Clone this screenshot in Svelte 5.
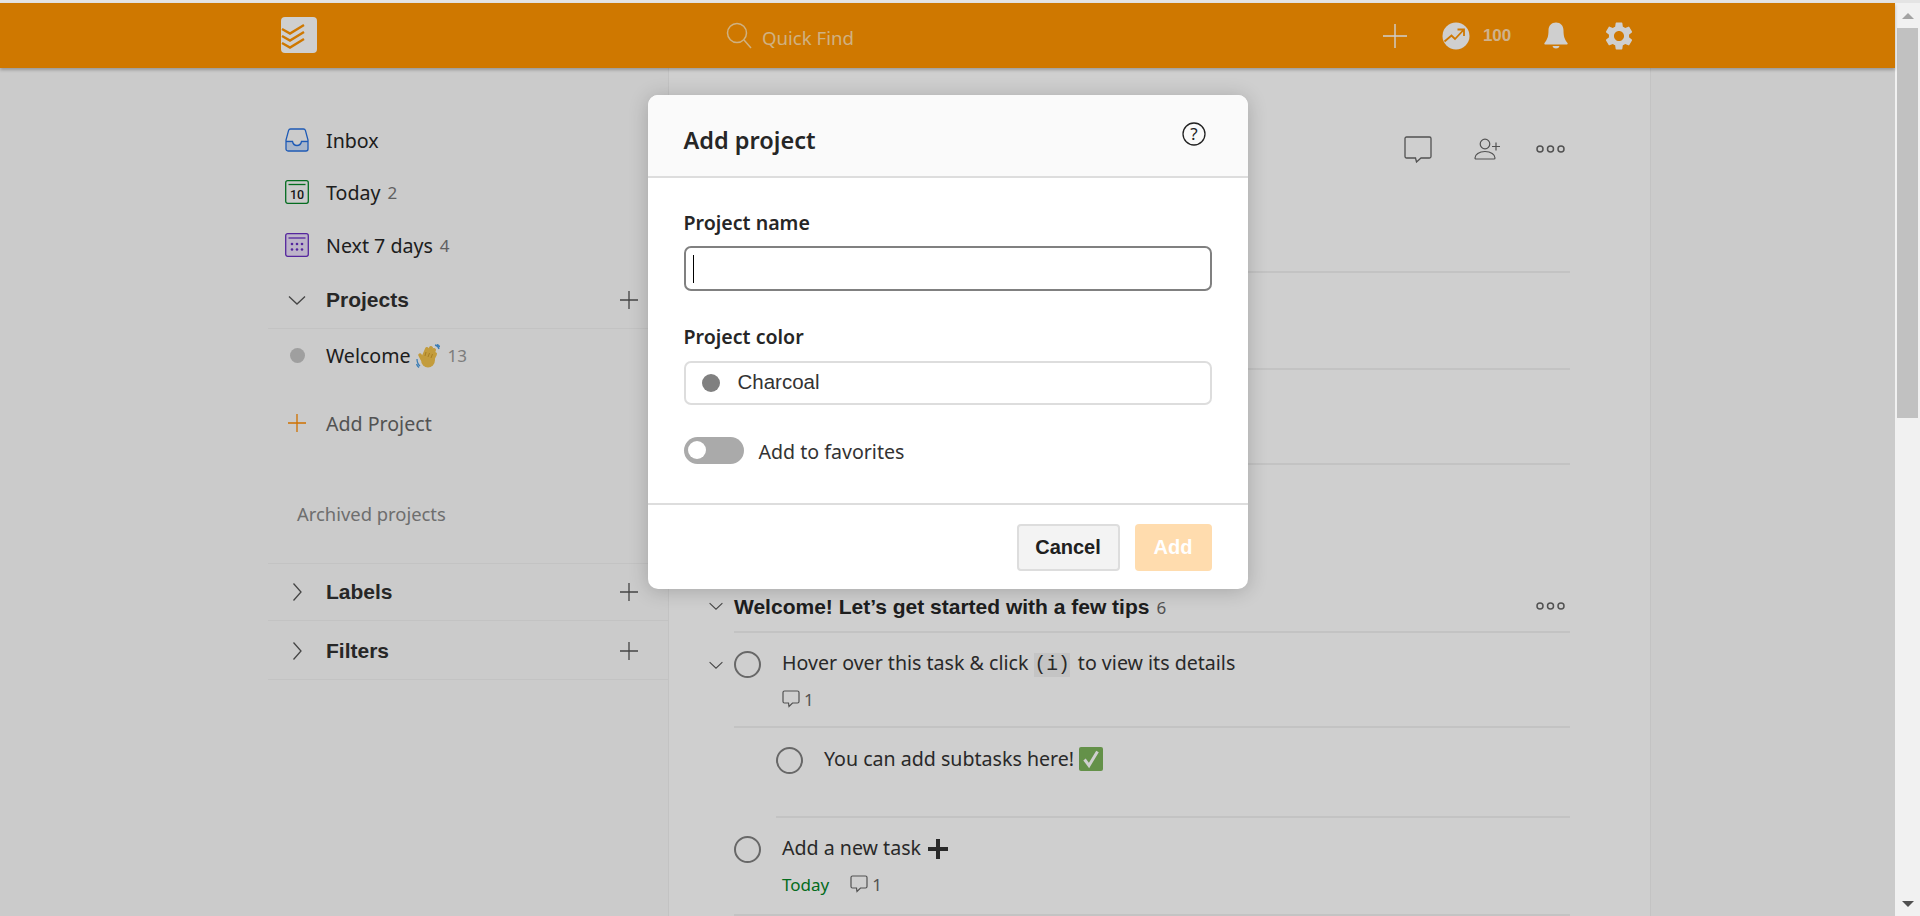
<script lang="ts">
    const count = { today: 2, week: 4, welcome: 13, tips: 6 };
</script>

{#snippet plus(color = "#555")}
    <svg class="plus" viewBox="0 0 20 20" width="20" height="20">
        <path d="M10 1v18M1 10h18" stroke={color} stroke-width="1.3" fill="none" />
    </svg>
{/snippet}

{#snippet chevron(open = false)}
    <svg class="chev" viewBox="0 0 20 20" width="20" height="20">
        {#if open}
            <path d="M2 6.5l8 7.5 8-7.5" stroke="#555" stroke-width="1.3" fill="none" />
        {:else}
            <path d="M6.5 1.5l7.5 8.5-7.5 8.5" stroke="#555" stroke-width="1.3" fill="none" />
        {/if}
    </svg>
{/snippet}

{#snippet bubble(size = 18)}
    <svg class="bubble" viewBox="0 0 18 18" width={size} height={size}>
        <path d="M2.5 1h13A1.5 1.5 0 0 1 17 2.500v9a1.500 1.500 0 0 1-1.500 1.500H10.500L7 16.500 6.500 13H2.500A1.500 1.500 0 0 1 1 11.500v-9A1.500 1.500 0 0 1 2.500 1z" stroke="#666" stroke-width="1.200" fill="none" />
    </svg>
{/snippet}

{#snippet bubbleLarge()}
    <svg viewBox="0 0 28 27" width="28" height="27">
        <path d="M2.500 1h23A1.500 1.500 0 0 1 27 2.500v18a1.500 1.500 0 0 1-1.500 1.500H17l-4.500 4-1-4H2.500A1.500 1.500 0 0 1 1 20.500v-18A1.500 1.500 0 0 1 2.500 1z" stroke="#666" stroke-width="1.300" fill="none" />
    </svg>
{/snippet}

{#snippet dots()}
    <svg viewBox="0 0 30 10" width="30" height="10">
        <circle cx="5" cy="5" r="3" stroke="#666" stroke-width="1.500" fill="none" />
        <circle cx="15.500" cy="5" r="3" stroke="#666" stroke-width="1.500" fill="none" />
        <circle cx="26" cy="5" r="3" stroke="#666" stroke-width="1.500" fill="none" />
    </svg>
{/snippet}

<div class="window">
    <div class="topline"></div>
    <div class="viewport">
        <div class="main">
            <header>
                <div class="logo">
                    <svg viewBox="0 0 36 36" width="36" height="36">
                        <path d="M1 12l8 4.500L23 8M1 19l8 4.500L23 15M1 26l8 4.500L23 22" stroke="#ff9400" stroke-width="2.400" fill="none" />
                    </svg>
                </div>
                <div class="search">
                    <svg viewBox="0 0 26 28" width="26" height="28">
                        <circle cx="11" cy="11" r="9.500" stroke="#ffdba0" stroke-width="1.500" fill="none" />
                        <path d="M18 18l7 8" stroke="#ffdba0" stroke-width="1.500" fill="none" />
                    </svg>
                    <span>Quick Find</span>
                </div>
                <div class="top-actions">
                    <svg class="top-plus" viewBox="0 0 26 26" width="26" height="26">
                        <path d="M13 1v24M1 13h24" stroke="#fff" stroke-width="1.400" fill="none" />
                    </svg>
                    <div class="karma">
                        <svg viewBox="0 0 28 28" width="28" height="28">
                            <circle cx="14" cy="14" r="13.500" fill="#fff" />
                            <path d="M2.500 19.500l7-6 3.500 3.500 8-8.500M15.500 7.500h6.500v6.500" stroke="#ff9400" stroke-width="1.800" fill="none" />
                        </svg>
                        <span>100</span>
                    </div>
                    <svg class="bell" viewBox="0 0 24 27" width="24" height="27">
                        <path d="M12 0.500c-4.500 0-7.500 3.200-7.500 8 0 6-1.200 9-4 12.500-.5.800 0 1.500 1 1.500h21c1 0 1.500-.7 1-1.500-2.800-3.500-4-6.500-4-12.500 0-4.800-3-8-7.500-8z" fill="#fff" />
                        <path d="M8.500 24h7c-.5 1.700-1.700 2.500-3.500 2.500S9 25.700 8.500 24z" fill="#fff" />
                    </svg>
                    <svg class="gear" viewBox="2 2 20 20" width="28" height="28">
                        <path d="M19.140 12.940c.04-.3.06-.61.06-.94 0-.32-.02-.64-.07-.94l2.030-1.580a.49.49 0 0 0 .12-.61l-1.920-3.320a.488.488 0 0 0-.59-.22l-2.390.96c-.5-.38-1.030-.7-1.620-.94l-.36-2.540a.484.484 0 0 0-.48-.41h-3.840c-.24 0-.43.17-.47.41l-.36 2.540c-.59.24-1.130.57-1.620.94l-2.390-.96c-.22-.08-.47 0-.59.22L2.740 8.870c-.12.21-.08.47.12.61l2.030 1.580c-.05.3-.09.63-.09.94s.02.64.07.94l-2.030 1.580a.49.49 0 0 0-.12.61l1.920 3.320c.12.22.37.29.59.22l2.390-.96c.5.38 1.030.7 1.620.94l.36 2.540c.05.24.24.41.48.41h3.840c.24 0 .44-.17.47-.41l.36-2.540c.59-.24 1.130-.56 1.620-.94l2.390.96c.22.08.47 0 .59-.22l1.920-3.320c.12-.22.07-.47-.12-.61l-2.010-1.580zM12 15.600c-1.980 0-3.600-1.620-3.600-3.600s1.620-3.600 3.600-3.600 3.600 1.620 3.600 3.600-1.620 3.600-3.600 3.600z" fill="#fff" />
                    </svg>
                </div>
            </header>

            <div class="columns">
                <nav>
                    <div class="nav-item">
                        <span class="slot">
                            <svg viewBox="0 0 24 24" width="24" height="24">
                                <path d="M1 14.500h6.500l1.500 3h6l1.500-3H23V21a1.500 1.500 0 0 1-1.500 1.500h-19A1.500 1.500 0 0 1 1 21z" fill="#cfe0fa" />
                                <path d="M5.500 1h13a2 2 0 0 1 1.900 1.400L23 12v9a2 2 0 0 1-2 2H3a2 2 0 0 1-2-2v-9L3.600 2.400A2 2 0 0 1 5.500 1zM1 13.500h6.500c.5 2.500 2 4 4.500 4s4-1.500 4.500-4H23" stroke="#246fe0" stroke-width="1.300" fill="none" />
                            </svg>
                        </span>
                        <span class="label">Inbox</span>
                    </div>
                    <div class="nav-item">
                        <span class="slot">
                            <svg viewBox="0 0 24 24" width="24" height="24">
                                <rect x="0.700" y="0.700" width="22.600" height="22.600" rx="2" stroke="#058527" stroke-width="1.300" fill="none" />
                                <path d="M3.500 4.500h17" stroke="#058527" stroke-width="1.300" />
                                <text x="12" y="19" text-anchor="middle" class="day">10</text>
                            </svg>
                        </span>
                        <span class="label">Today</span><span class="count">{count.today}</span>
                    </div>
                    <div class="nav-item week">
                        <span class="slot">
                            <svg viewBox="0 0 24 24" width="24" height="24">
                                <rect x="0.700" y="0.700" width="22.600" height="22.600" rx="2" stroke="#692fc2" stroke-width="1.300" fill="#e9def8" />
                                <path d="M3.500 5h17" stroke="#692fc2" stroke-width="1.300" />
                                <g fill="#692fc2">
                                    <circle cx="7" cy="11" r="1.300" /><circle cx="12" cy="11" r="1.300" /><circle cx="17" cy="11" r="1.300" />
                                    <circle cx="7" cy="16.500" r="1.300" /><circle cx="12" cy="16.500" r="1.300" /><circle cx="17" cy="16.500" r="1.300" />
                                </g>
                            </svg>
                        </span>
                        <span class="label">Next 7 days</span><span class="count">{count.week}</span>
                    </div>

                    <div class="nav-head projects">
                        <span class="slot">{@render chevron(true)}</span>
                        <span class="head-label">Projects</span>
                        {@render plus()}
                    </div>
                    <div class="project">
                        <span class="slot"><span class="dot"></span></span>
                        <span class="label">Welcome</span>
                        <svg class="wave" viewBox="0 0 24 24" width="24" height="24">
                            <g stroke="#f0c04a" stroke-width="4" stroke-linecap="round" fill="none">
                                <path d="M8 12l3-7" />
                                <path d="M11 13l4-9" />
                                <path d="M14 14l4-8" />
                                <path d="M16 16l3-6" />
                            </g>
                            <ellipse cx="12" cy="16" rx="7" ry="7.500" fill="#f0c04a" />
                            <path d="M6 15l-2-4" stroke="#f0c04a" stroke-width="3.500" stroke-linecap="round" />
                            <path d="M10 8l-1 4M13.500 9l-1.500 4M16.500 10l-1.500 4" stroke="#cf9c2c" stroke-width="1" fill="none" />
                            <path d="M1 15c0 3 1 5.500 3 7M.5 20c.5 1.500 1.200 2.500 2.500 3.500M19 1c2 .5 3.500 2 4 4M21 .5c1 .3 2 1 2.800 2.500" stroke="#4a9bdf" stroke-width="1.300" fill="none" />
                        </svg>
                        <span class="count dim">{count.welcome}</span>
                    </div>
                    <div class="add-project">
                        <span class="slot">{@render plus("#ff8c00")}</span>
                        <span class="label muted">Add Project</span>
                    </div>
                    <div class="archived">Archived projects</div>
                    <div class="nav-head labels">
                        <span class="slot">{@render chevron()}</span>
                        <span class="head-label">Labels</span>
                        {@render plus()}
                    </div>
                    <div class="nav-head filters">
                        <span class="slot">{@render chevron()}</span>
                        <span class="head-label">Filters</span>
                        {@render plus()}
                    </div>
                </nav>

                <main>
                    <div class="toolbar">
                        {@render bubbleLarge()}
                        <svg class="person" viewBox="0 0 26 22" width="26" height="22">
                            <circle cx="11" cy="6" r="4.800" stroke="#666" stroke-width="1.200" fill="none" />
                            <path d="M1 20c0-3.500 4-6.500 10-6.500s10 3 10 6.500c0 .6-.5 1-1 1H2c-.5 0-1-.4-1-1z" stroke="#666" stroke-width="1.200" fill="none" />
                            <path d="M18 8.500h8M22 4.500v8" stroke="#666" stroke-width="1.200" fill="none" />
                        </svg>
                        <span class="toolbar-dots">{@render dots()}</span>
                    </div>
                    <div class="blank first"></div>
                    <div class="blank second"></div>
                    <div class="blank third"></div>

                    <div class="section">
                        <span class="section-chev">{@render chevron(true)}</span>
                        <span class="section-name">Welcome! Let’s get started with a few tips</span>
                        <span class="section-count">{count.tips}</span>
                        <span class="section-dots">{@render dots()}</span>
                    </div>

                    <div class="task one">
                        <span class="task-chev">{@render chevron(true)}</span>
                        <span class="check"></span>
                        <div class="task-body">
                            <div class="task-text">Hover over this task &amp; click <code>(i)</code> to view its details</div>
                            <div class="task-meta">{@render bubble()}<span class="meta-count">1</span></div>
                        </div>
                    </div>
                    <div class="task sub">
                        <span class="check"></span>
                        <div class="task-body">
                            <div class="task-text">
                                You can add subtasks here!
                                <svg class="inline-mark" viewBox="0 0 24 24" width="24" height="24">
                                    <rect width="24" height="24" rx="2" fill="#7cb35b" />
                                    <path d="M5.500 12.500l4.500 6 8.500-14" stroke="#fff" stroke-width="3" fill="none" />
                                </svg>
                            </div>
                        </div>
                    </div>
                    <div class="task three">
                        <span class="check"></span>
                        <div class="task-body">
                            <div class="task-text">
                                Add a new task
                                <svg class="inline-plus" viewBox="0 0 22 22" width="22" height="22">
                                    <path d="M11 1v20M1 11h20" stroke="#333" stroke-width="4" fill="none" />
                                </svg>
                            </div>
                            <div class="task-meta">
                                <span class="due">Today</span>
                                {@render bubble()}<span class="meta-count">1</span>
                            </div>
                        </div>
                    </div>
                </main>
                <div class="gutter"></div>
            </div>

            <div class="overlay">
                <div class="modal">
                    <div class="modal-head">
                        <h2>Add project</h2>
                        <svg viewBox="0 0 24 24" width="24" height="24">
                            <circle cx="12" cy="12" r="11" stroke="#222" stroke-width="1.300" fill="none" />
                            <text x="12" y="18" text-anchor="middle" class="help">?</text>
                        </svg>
                    </div>
                    <div class="modal-body">
                        <div class="field-label">Project name</div>
                        <div class="input"><span class="caret"></span></div>
                        <div class="field-label color">Project color</div>
                        <div class="select"><span class="swatch"></span><span class="select-text">Charcoal</span></div>
                        <div class="favorite">
                            <span class="toggle"><span class="knob"></span></span>
                            <span class="favorite-text">Add to favorites</span>
                        </div>
                    </div>
                    <div class="modal-foot">
                        <button class="cancel">Cancel</button>
                        <button class="add" disabled>Add</button>
                    </div>
                </div>
            </div>
        </div>

        <div class="scrollbar">
            <div class="arrow"><span class="tri up"></span></div>
            <div class="thumb"></div>
            <div class="track"></div>
            <div class="arrow"><span class="tri down"></span></div>
        </div>
    </div>
</div>

<style>
    :global(body) {
        margin: 0;
        overflow: hidden;
        background: #fff;
    }

    .window {
        width: 1920px;
        height: 916px;
        display: flex;
        flex-direction: column;
        overflow: hidden;
        font-family: "Noto Sans", sans-serif;
        font-size: 19.6px;
        color: #262626;
    }

    .topline {
        height: 3px;
        background: #e4e4e4;
    }

    .viewport {
        flex: 1;
        display: flex;
        min-height: 0;
    }

    .main {
        flex: 1;
        position: relative;
        display: flex;
        flex-direction: column;
        min-width: 0;
    }

    /* HEADER */
    header {
        height: 65px;
        flex: none;
        display: flex;
        align-items: center;
        background: #ff9400;
        box-shadow: 0 2px 3px rgba(0, 0, 0, 0.25);
        position: relative;
        z-index: 1;
        padding-left: 281px;
    }

    .logo {
        width: 36px;
        height: 36px;
        margin-top: -1px;
        border-radius: 4px;
        background: #fff;
    }

    .logo svg, nav svg, header svg, main svg {
        display: block;
    }

    .search {
        margin-left: 409px;
        display: flex;
        align-items: center;
        gap: 10px;
        font-size: 18.6px;
        color: #ffdba0;
    }

    .search span {
        margin-top: 3px;
    }

    .top-actions {
        margin-left: 528px;
        display: flex;
        align-items: center;
    }

    .karma {
        margin-left: 34px;
        display: flex;
        align-items: center;
        gap: 13px;
        font-family: "Liberation Sans", sans-serif;
        font-weight: 700;
        font-size: 17px;
        color: #ffdcae;
    }

    .bell {
        margin-left: 33px;
    }

    .gear {
        margin-left: 37px;
    }

    /* LAYOUT */
    .columns {
        flex: 1;
        display: flex;
        min-height: 0;
    }

    nav {
        width: 668px;
        flex: none;
        box-sizing: border-box;
        padding: 48px 0 0 268px;
        background: #fafafa;
    }

    main {
        width: 983px;
        flex: none;
        box-sizing: border-box;
        background: #fff;
        border-left: 1px solid #f0f0f0;
        border-right: 1px solid #f0f0f0;
        padding: 0 80px 0 65px;
    }

    .gutter {
        flex: 1;
        background: #fafafa;
    }

    /* SIDEBAR */
    .nav-item {
        height: 52px;
        box-sizing: border-box;
        padding-bottom: 3px;
        display: flex;
        align-items: center;
    }

    .nav-item.week {
        padding-bottom: 1px;
    }

    .nav-item .slot {
        margin-bottom: 2px;
    }

    .slot {
        width: 58px;
        flex: none;
        display: flex;
        justify-content: center;
    }

    .count {
        margin-left: 7px;
        font-size: 17px;
        color: #777;
    }

    .count.dim {
        margin-left: 8px;
        color: #999;
    }

    .nav-head {
        display: flex;
        align-items: center;
        box-sizing: border-box;
        border-bottom: 1px solid #f0f0f0;
        padding-right: 29px;
    }

    .projects {
        height: 57px;
    }

    .labels {
        height: 58px;
        border-top: 1px solid #f0f0f0;
    }

    .filters {
        height: 59px;
        padding-top: 2px;
    }

    .head-label {
        flex: 1;
        font-family: "Liberation Sans", sans-serif;
        font-weight: 700;
        font-size: 21px;
        color: #303030;
    }

    .project {
        height: 53px;
        display: flex;
        align-items: center;
    }

    .dot {
        width: 15px;
        height: 15px;
        border-radius: 50%;
        background: #c4c4c4;
    }

    .wave {
        margin-left: 5px;
    }

    .add-project {
        height: 52px;
        margin-top: 15px;
        display: flex;
        align-items: center;
    }

    .muted {
        color: #666;
    }

    .archived {
        height: 52px;
        margin-top: 38px;
        margin-bottom: 24px;
        padding-left: 29px;
        display: flex;
        align-items: center;
        font-size: 18.4px;
        color: #888;
    }

    .day {
        font-family: "Roboto", sans-serif;
        font-size: 12.5px;
        font-weight: 500;
        fill: #222;
    }

    /* CONTENT */
    .toolbar {
        height: 104px;
        box-sizing: border-box;
        padding: 68px 5px 0 0;
        display: flex;
        justify-content: flex-end;
        align-items: flex-start;
        gap: 35px;
    }

    .person {
        margin: 2px 0 0 7px;
    }

    .toolbar-dots {
        margin-top: 8px;
    }

    .blank {
        border-bottom: 2px solid #f0f0f0;
    }

    .first {
        height: 99px;
    }

    .second {
        height: 95px;
    }

    .third {
        height: 93px;
    }

    .section {
        height: 168px;
        box-sizing: border-box;
        border-bottom: 2px solid #f0f0f0;
        display: flex;
        align-items: flex-end;
        padding-bottom: 12px;
        position: relative;
    }

    .section-chev, .task-chev {
        position: absolute;
        left: -26px;
    }

    .section-chev {
        bottom: 15px;
    }

    .task-chev {
        top: 22px;
    }

    .section-chev :global(svg), .task-chev :global(svg) {
        width: 16px;
    }

    .section-name {
        font-family: "Liberation Sans", sans-serif;
        font-weight: 700;
        font-size: 21px;
    }

    .section-count {
        margin-left: 7px;
        font-size: 17px;
        color: #666;
    }

    .section-dots {
        margin-left: auto;
        margin-right: 5px;
        margin-bottom: 8px;
    }

    .task {
        display: flex;
        position: relative;
        border-bottom: 2px solid #f0f0f0;
        box-sizing: border-box;
    }

    .task.one {
        height: 95px;
        padding-top: 17px;
    }

    .task.sub {
        height: 90px;
        margin-left: 42px;
        padding-top: 18px;
    }

    .task.three {
        height: 98px;
        padding-top: 17px;
    }

    .check {
        width: 23px;
        height: 23px;
        flex: none;
        border: 2px solid #808080;
        border-radius: 50%;
        margin-top: 1px;
    }

    .task-body {
        margin-left: 21px;
    }

    .task-text {
        height: 26px;
        line-height: 26px;
        white-space: nowrap;
        color: #333;
    }

    .task-text svg {
        display: inline-block;
        vertical-align: -5px;
    }

    .inline-plus {
        margin-left: 1px;
    }

    code {
        display: inline-block;
        margin: 0 3px 0 1px;
        font-family: "Liberation Mono", monospace;
        font-size: 19.6px;
        background: #f2f2f2;
        line-height: 24px;
    }

    .task-meta {
        display: flex;
        align-items: center;
        margin-top: 13px;
        height: 20px;
        font-size: 17px;
        color: #666;
    }

    .meta-count {
        margin-left: 4px;
    }

    .due {
        color: #058527;
        margin-right: 21px;
    }

    /* OVERLAY */
    .overlay {
        position: absolute;
        inset: 0;
        z-index: 5;
        background: rgba(0, 0, 0, 0.19);
        display: flex;
        justify-content: center;
        align-items: flex-start;
        padding-top: 92px;
    }

    .modal {
        width: 600px;
        background: #fff;
        border-radius: 10px;
        box-shadow: 0 2px 20px rgba(0, 0, 0, 0.2);
        overflow: hidden;
    }

    .modal-head {
        height: 83px;
        box-sizing: border-box;
        background: #fafafa;
        border-bottom: 2px solid #ddd;
        padding: 0 36px;
        display: flex;
        justify-content: space-between;
    }

    h2 {
        margin: 0;
        padding-top: 29px;
        font-size: 23.5px;
        font-weight: 600;
        line-height: 32px;
    }

    .modal-head svg {
        margin: 27px 6px 0 0;
    }

    .help {
        font-family: "Noto Sans", sans-serif;
        font-size: 17px;
        fill: #222;
    }

    .modal-body {
        padding: 0 36px;
        height: 327px;
        box-sizing: border-box;
        border-bottom: 2px solid #ddd;
    }

    .field-label {
        font-size: 19.6px;
        font-weight: 600;
        line-height: 28px;
        padding-top: 31px;
    }

    .field-label.color {
        padding-top: 32px;
    }

    .input, .select {
        box-sizing: border-box;
        border: 2px solid #ddd;
        border-radius: 7px;
    }

    .input {
        height: 45px;
        margin-top: 9px;
        border-color: #808080;
        display: flex;
        align-items: center;
        padding-left: 7px;
    }

    .caret {
        width: 1px;
        height: 28px;
        background: #000;
    }

    .select {
        height: 44px;
        margin-top: 10px;
        display: flex;
        align-items: center;
        padding-left: 16px;
        font-family: "Liberation Sans", sans-serif;
        font-size: 20.5px;
        color: #333;
    }

    .select-text {
        margin-top: -2px;
    }

    .swatch {
        width: 18px;
        height: 18px;
        border-radius: 50%;
        background: #808080;
        margin-right: 18px;
    }

    .favorite {
        margin-top: 30px;
        display: flex;
        align-items: center;
        gap: 15px;
        color: #333;
    }

    .favorite-text {
        margin-top: 3px;
    }

    .toggle {
        width: 60px;
        height: 27px;
        border-radius: 14px;
        background: #aaa;
        box-sizing: border-box;
        padding: 4px;
    }

    .knob {
        display: block;
        width: 18px;
        height: 18px;
        border-radius: 50%;
        background: #fff;
    }

    .modal-foot {
        height: 84px;
        box-sizing: border-box;
        padding: 19px 36px 0;
        display: flex;
        justify-content: flex-end;
        gap: 15px;
    }

    button {
        height: 47px;
        border-radius: 4px;
        font-family: "Liberation Sans", sans-serif;
        font-size: 20px;
        font-weight: 700;
        box-sizing: border-box;
    }

    .cancel {
        width: 103px;
        background: #f3f3f3;
        border: 2px solid #ddd;
        color: #202020;
    }

    .add {
        width: 77px;
        background: #ffdcae;
        border: 0;
        color: #fff;
    }

    /* SCROLLBAR */
    .scrollbar {
        width: 25px;
        flex: none;
        background: #f1f1f1;
        display: flex;
        flex-direction: column;
        align-items: center;
    }

    .arrow {
        height: 25px;
        flex: none;
        display: flex;
        align-items: center;
        justify-content: center;
    }

    .tri {
        width: 0;
        height: 0;
        border-left: 6px solid transparent;
        border-right: 6px solid transparent;
    }

    .tri.up {
        border-bottom: 6px solid #a3a3a3;
    }

    .tri.down {
        border-top: 6px solid #505050;
    }

    .thumb {
        width: 21px;
        height: 390px;
        background: #c1c1c1;
    }

    .track {
        flex: 1;
    }
</style>
